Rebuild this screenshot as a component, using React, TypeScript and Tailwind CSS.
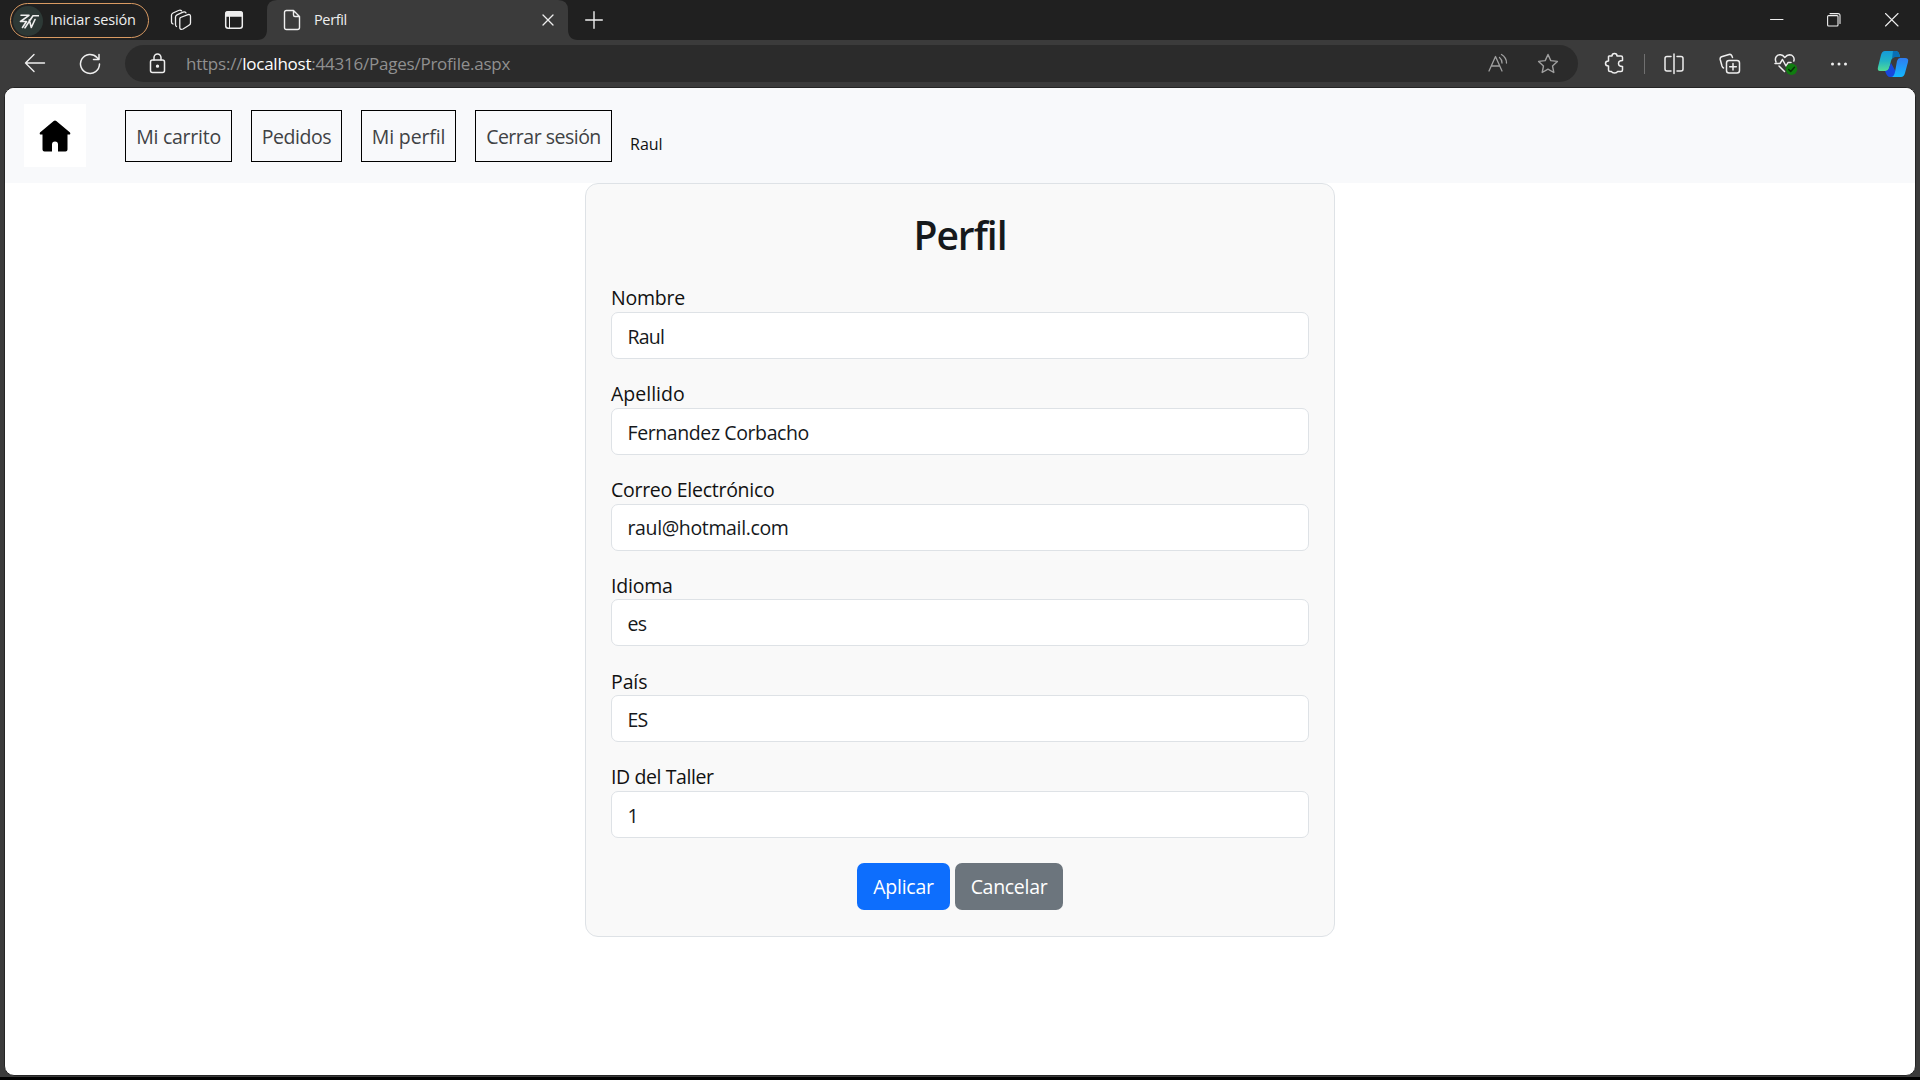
import { type ReactNode } from "react";

const fields = [
  { label: "Nombre", value: "Raul", lt: "tracking-[-0.2px]", vt: "tracking-[-0.8px]" },
  { label: "Apellido", value: "Fernandez Corbacho", lt: "tracking-[0px]", vt: "tracking-[-0.4px]" },
  { label: "Correo Electrónico", value: "raul@hotmail.com", lt: "tracking-[-0.27px]", vt: "tracking-[-0.36px]" },
  { label: "Idioma", value: "es", lt: "tracking-[-0.2px]", vt: "tracking-[-0.8px]" },
  { label: "País", value: "ES", lt: "tracking-[-0.1px]", vt: "tracking-[-0.8px]" },
  { label: "ID del Taller", value: "1", lt: "tracking-[-0.4px]", vt: "tracking-[0px]" },
];

const links = [
  { text: "Mi carrito", size: "w-[107px]", t: "tracking-[-0.25px]" },
  { text: "Pedidos", size: "w-[91px]", t: "tracking-[-0.45px]" },
  { text: "Mi perfil", size: "w-[95px]", t: "tracking-[-0.15px]" },
  { text: "Cerrar sesión", size: "w-[137px]", t: "tracking-[-0.5px]" },
];

function Icon({ w = 20, h = 20, className = "", sw = 1.3, children }: { w?: number; h?: number; className?: string; sw?: number; children: ReactNode }) {
  return (
    <svg width={w} height={h} viewBox={`0 0 ${w} ${h}`} fill="none" stroke="currentColor" strokeWidth={sw} strokeLinecap="round" strokeLinejoin="round" className={`shrink-0 ${className}`}>
      {children}
    </svg>
  );
}

function TitleBar() {
  return (
    <div className="flex h-10 bg-[#202020] text-[#eeeeee]">
      <div className="mt-[3px] ml-[10px] flex h-[35px] w-[139px] items-center rounded-full border border-[#d99a62] pl-[2px]">
        <div className="flex size-[30px] items-center justify-center rounded-full bg-[#2d3936]">
          <Icon w={22} h={18} sw={1.6}>
            <path d="M4 3.300H12L3.500 9.500H9.500L5.500 15.500M21.500 3.800H16L8 15.800M12.300 8L14.300 15.500L18 7.500" />
          </Icon>
        </div>
        <span className="mb-[2px] ml-[7px] text-[14.5px] leading-5 tracking-[-0.18px] whitespace-nowrap">Iniciar sesión</span>
      </div>
      <Icon w={22} h={22} className="mt-[9px] ml-[21px]">
        <path d="M10.5 8.5L18 5.6Q20.5 5 20.500 7.500V14Q20.500 15.500 19 16.200L13 20Q9.800 21 9.800 18.500V10Q9.800 9 10.500 8.500Z" />
        <path d="M6.500 17.500Q5.500 17 5.500 15.500V8Q5.500 6.500 7 5.800L13 3.200Q15 2.500 16 3.800" />
        <path d="M3 15Q1.500 14.500 1.500 13V6Q1.500 4.800 3 4L8.500 1.500Q10.500 .8 11.500 1.800" />
      </Icon>
      <Icon w={20} h={20} className="mt-[10px] ml-[32px]" sw={1.5}>
        <rect x="1.700" y="1.700" width="16.600" height="16.600" rx="2.500" />
        <path d="M2 3Q2 2 3 2H17Q18 2 18 3V6H2Z" fill="currentColor" />
        <path d="M5.500 6V18" strokeWidth="1" />
      </Icon>
      <svg width="322" height="40" viewBox="0 0 322 40" className="-mr-[322px] ml-[13px] shrink-0">
        <path d="M0 40Q10 40 10 29V10Q10 0 20 0H301Q311 0 311 10V29Q311 40 321 40Z" fill="#3b3b3b" />
      </svg>
      <div className="relative flex w-[322px]">
        <Icon w={18} h={22} className="mt-[9px] ml-[26px]" sw={1.4}>
          <path d="M3.500 1.500H10.500L16.500 7.500V18.500Q16.500 20.500 14.500 20.500H3.500Q1.500 20.500 1.500 18.500V3.500Q1.500 1.500 3.500 1.500ZM10.500 1.500V6Q10.500 7.500 12 7.500H16.500" />
        </Icon>
        <span className="mt-[10px] ml-[13px] self-start text-[14.5px] leading-5 tracking-[-0.35px]">Perfil</span>
        <Icon w={12} h={12} className="absolute top-[14px] left-[285px]">
          <path d="M1 1L11 11M11 1L1 11" />
        </Icon>
      </div>
      <Icon w={18} h={18} className="mt-[11px] ml-[6px]" sw={1.4}>
        <path d="M9 .7V17.300M.7 9H17.300" />
      </Icon>
      <div className="flex-1" />
      <Icon w={14} h={14} className="mt-[13px] mr-[43px]" sw={1}>
        <path d="M.5 6.500H13" />
      </Icon>
      <Icon w={14} h={14} className="mt-[13px] mr-[44px]" sw={1.1}>
        <rect x=".6" y="2.600" width="10.400" height="10.400" rx="1" />
        <path d="M3 .6H11Q13 .6 13 2.600V10.500" />
      </Icon>
      <Icon w={14} h={14} className="mt-[13px] mr-[21px]" sw={1.1}>
        <path d="M.5 .5L13 13M13 .5L.5 13" />
      </Icon>
    </div>
  );
}

function Toolbar() {
  return (
    <div className="flex h-[47px] bg-[#3b3b3b] text-[#eeeeee]">
      <Icon w={22} h={20} className="mt-[13px] ml-[24px]" sw={1.4}>
        <path d="M20.500 10H1.500M10 1.500L1.500 10L10 18.500" />
      </Icon>
      <Icon w={22} h={22} className="mt-[13px] ml-[33px]" sw={1.5}>
        <path d="M20.500 11A9.500 9.500 0 1 1 18 4.500L19.500 6M20 1.500V6.500H14.500" />
      </Icon>
      <div className="mt-[5px] ml-[24px] flex h-[37px] w-[1453px] rounded-full bg-[#2b2b2b]">
        <Icon w={18} h={21} className="mt-[8px] ml-[24px]" sw={1.5}>
          <rect x="1.500" y="7" width="14" height="12.500" rx="2" />
          <path d="M5 7V4.500A3.500 3.500 0 0 1 12 4.500V7" />
          <circle cx="8.500" cy="13.200" r=".9" fill="currentColor" />
        </Icon>
        <span className="mt-[7px] ml-[19px] self-start text-[17px] leading-6 tracking-[-0.23px] whitespace-nowrap text-[#909090]">
          https://<span className="text-white">localhost</span>:44316/Pages/Profile.aspx
        </span>
        <div className="flex-1" />
        <Icon w={21} h={20} className="mt-[8px] mr-[28px] text-[#a0a0a0]">
          <path d="M1 18L7.500 3.500L14 18M3.500 13H11.500M11.500 4.500Q14 6.500 14 10M13.500 1.500Q18.500 4.500 18.500 10" />
        </Icon>
        <Icon w={22} h={21} className="mt-[8px] mr-[19px] text-[#a0a0a0]" sw={1.400}>
          <path d="M11 1.500L13.800 7.600L20.400 8.400L15.500 12.900L16.800 19.500L11 16.200L5.200 19.500L6.500 12.900L1.600 8.400L8.200 7.600Z" />
        </Icon>
      </div>
      <Icon w={22} h={22} className="mt-[12px] ml-[26px]" sw={1.500}>
        <path d="M5 4H8Q8 1.500 10.500 1.500T13 4H17Q18.500 4 18.500 5.500V8.500Q14.500 8.500 14.500 11.500T18.500 14.500V18Q18.500 19.500 17 19.500H13.500Q13 21 10.500 21T7.500 19.500H6Q4.500 19.500 4.500 18V14Q1.500 14 1.500 11.500T4.500 9V4.500Z" />
      </Icon>
      <div className="mt-[14px] ml-[18px] h-5 w-px bg-[#707070]" />
      <Icon w={20} h={22} className="mt-[13px] ml-[19px]" sw={1.500}>
        <path d="M7 3.500H3Q1 3.500 1 5.500V16Q1 18 3 18H7M13 3.500H17Q19 3.500 19 5.500V16Q19 18 17 18H13M10 1V20.500" />
      </Icon>
      <Icon w={22} h={22} className="mt-[13px] ml-[35px]" sw={1.500}>
        <rect x="7.500" y="7.500" width="13" height="12.500" rx="2.500" />
        <path d="M14 10.500V17M10.700 13.800H17.300M4.500 15Q3.500 14.500 3 13L1.200 6.500Q.8 4.500 2.500 3.800L10 1.500Q12 1 12.700 2.500L13.500 4.500" />
      </Icon>
      <Icon w={24} h={23} className="mt-[13px] ml-[33px]" sw={1.500}>
        <path d="M2 9C0 4 3.500 1.500 6.500 1.800Q9 2 10.800 4.500Q13 2 15.500 1.800C18.500 1.800 21 4.500 19.800 8M5 13L10.500 18.500M1 10.500H6L8.500 6.500L12 13L14 9.500H17" />
        <circle cx="17.500" cy="16.300" r="5.700" fill="#107c10" stroke="none" />
        <path d="M14.700 16.500L16.700 18.500L20.500 14.300" stroke="#082f08" />
      </Icon>
      <Icon w={18} h={6} className="mt-[21px] ml-[32px]">
        <g fill="currentColor" stroke="none">
          <circle cx="2.500" cy="3" r="1.500" />
          <circle cx="9" cy="3" r="1.500" />
          <circle cx="15.500" cy="3" r="1.500" />
        </g>
      </Icon>
      <svg width="32" height="28" viewBox="0 0 32 28" className="mt-[10px] ml-[29px] shrink-0">
        <defs>
          <linearGradient id="cl" x1="0" y1="0" x2="0" y2="1"><stop stopColor="#149bdb" /><stop offset=".5" stopColor="#22b3c5" /><stop offset="1" stopColor="#52dc95" /></linearGradient>
          <linearGradient id="cr" x1="0" y1="0" x2="0" y2="1"><stop stopColor="#2f7cf0" /><stop offset="1" stopColor="#13b8ff" /></linearGradient>
        </defs>
        <path d="M8 1H19Q22 1 23 7H18Q15 7 14 11L12 19Q11 21 9 21H3Q0 21 1 17L4 5Q5 1 8 1Z" fill="url(#cl)" />
        <path d="M16 1H19Q22 1 23 7H18Q16 7 15 9Z" fill="#086fb5" />
        <path d="M8 21Q11 21 12 18L14 13L19 22L17 27H13Q10 27 8 21Z" fill="#1748dc" />
        <path d="M23 8H28Q32 8 31 12L28 23Q27 27 24 27H14Q17 27 18 22L20 11Q21 8 23 8Z" fill="url(#cr)" />
      </svg>
    </div>
  );
}

function NavBar() {
  return (
    <nav className="flex h-[95px] bg-[#f8f9fb]">
      <div className="mt-4 ml-[19px] flex h-[63px] w-[62px] items-center justify-center bg-white">
        <svg width="32" height="32" viewBox="0 0 32 32">
          <path d="M14.700 1Q16 0 17.300 1L31 12.500Q32 14.500 30 14.500H28.500V29.500Q28.500 31.500 26.500 31.500H19V24.500Q19 21.500 16 21.500T13 24.500V31.500H5.500Q3.500 31.500 3.500 29.500V14.500H2Q0 14.500 1 12.500Z" />
        </svg>
      </div>
      <div className="mt-[22px] ml-[39px] flex gap-[19px]">
        {links.map((l) => (
          <a key={l.text} className={`flex h-[52px] items-center justify-center border border-black pt-[2px] text-[19.500px] whitespace-nowrap text-[#404244] ${l.size}`}>
            <span className={l.t}>{l.text}</span>
          </a>
        ))}
      </div>
      <span className="mt-[44px] ml-[18px] self-start text-[16px] leading-6 text-[#111111]">Raul</span>
    </nav>
  );
}

function ProfileCard() {
  return (
    <main className="mx-auto h-[754px] w-[750px] rounded-[13px] border border-[#dee2e6] bg-[#f9f9f9] px-[25px] text-[19.500px] text-[#16191c]">
      <h2 className="mt-[27px] mb-[23px] text-center text-[39px] leading-[48px] font-semibold tracking-[-1px]">Perfil</h2>
      {fields.map((f) => (
        <div key={f.label} className="mb-[18.800px]">
          <div className="flex h-[30px] items-center pt-[2px] text-[#111111]"><span className={f.lt}>{f.label}</span></div>
          <div className="flex h-[47px] items-center rounded-[7px] border border-[#dee2e6] bg-white pt-[2px] pl-[15.500px]"><span className={f.vt}>{f.value}</span></div>
        </div>
      ))}
      <div className="mt-[25px] flex justify-center gap-[5px] text-white">
        <button className="h-[47px] w-[93px] rounded-[7px] bg-[#0d6efd] pt-px tracking-[-0.25px]">Aplicar</button>
        <button className="h-[47px] w-[108px] rounded-[7px] bg-[#6c757d] pt-px tracking-[-0.3px]">Cancelar</button>
      </div>
    </main>
  );
}

export default function App() {
  return (
    <div className="flex h-[1080px] w-[1920px] flex-col overflow-hidden border-b-[3px] border-black bg-[#3b3b3b] font-['Open_Sans','Noto_Sans',sans-serif]">
      <TitleBar />
      <Toolbar />
      <div className="mx-1 h-[989px] rounded-[10px] border border-[#242424] bg-white">
        <div className="h-full overflow-hidden rounded-[9px]">
          <NavBar />
          <ProfileCard />
        </div>
      </div>
    </div>
  );
}
